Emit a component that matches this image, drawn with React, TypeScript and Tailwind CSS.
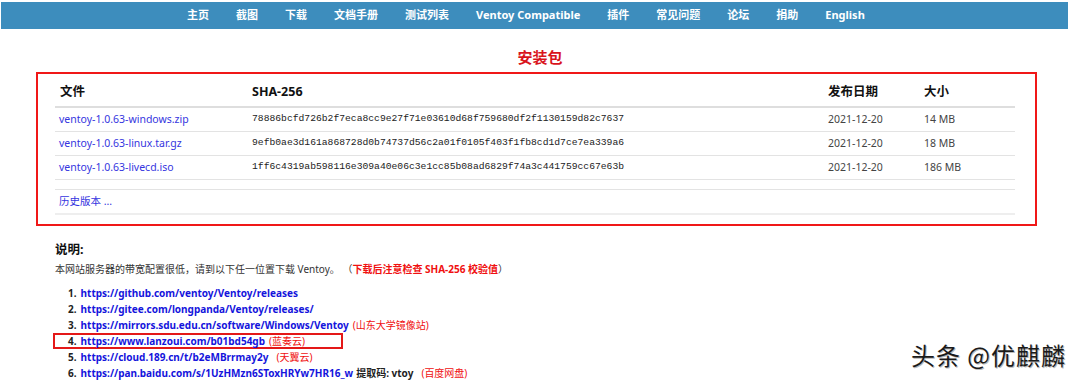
import React from 'react';

const navItems = ['主页', '截图', '下载', '文档手册', '测试列表', 'Ventoy Compatible', '插件', '常见问题', '论坛', '捐助', 'English'];

const files = [
  { name: 'ventoy-1.0.63-windows.zip', sha: '78886bcfd726b2f7eca8cc9e27f71e03610d68f759680df2f1130159d82c7637', size: '14 MB' },
  { name: 'ventoy-1.0.63-linux.tar.gz', sha: '9efb0ae3d161a868728d0b74737d56c2a01f0105f403f1fb8cd1d7ce7ea339a6', size: '18 MB' },
  { name: 'ventoy-1.0.63-livecd.iso', sha: '1ff6c4319ab598116e309a40e06c3e1cc85b08ad6829f74a3c441759cc67e63b', size: '186 MB' },
];

const mirrors = [
  { url: 'https://github.com/ventoy/Ventoy/releases' },
  { url: 'https://gitee.com/longpanda/Ventoy/releases/' },
  { url: 'https://mirrors.sdu.edu.cn/software/Windows/Ventoy', note: '(山东大学镜像站)' },
  { url: 'https://www.lanzoui.com/b01bd54gb', note: '(蓝奏云)', boxed: true },
  { url: 'https://cloud.189.cn/t/b2eMBrrmay2y', note: '(天翼云)', gap: true },
  { url: 'https://pan.baidu.com/s/1UzHMzn6SToxHRYw7HR16_w', code: true, note: '(百度网盘)', gap: true },
];

export default function App() {
  return (
    <div className="relative w-[1080px] h-[389px] overflow-hidden bg-white font-['Noto_Sans','Noto_Sans_CJK_SC',sans-serif] text-[#333]">
      {/* top menu */}
      <div className="mt-[2px] ml-[1px] w-[1067px] h-[27px] bg-[#3d8dbd] flex items-center pl-[186px] gap-[27px] text-white font-bold text-[11px]">
        {navItems.map((item) => (
          <span key={item}>{item}</span>
        ))}
      </div>

      <div className="mt-[18px] text-center text-[15px] leading-[20px] font-bold text-[#d9141c]">安装包</div>

      {/* release table */}
      <div className="mt-[5px] ml-[36px] w-[1001px] h-[154px] border-2 border-[#f01818] pl-[17px]">
        <div className="w-[960px]">
          <div className="flex h-[34px] items-center pt-[4px] border-b-2 border-[#dedede] text-[12.5px] font-bold text-[#111]">
            <div className="w-[197px] pl-[5px]">文件</div>
            <div className="w-[576px]">SHA-256</div>
            <div className="w-[96px]">发布日期</div>
            <div>大小</div>
          </div>
          {files.map((f) => (
            <div key={f.name} className="flex h-[24px] items-center border-b border-[#e3e3e3] text-[10.5px]">
              <div className="w-[197px] pl-[4px] text-[#3535e0]">{f.name}</div>
              <div className="w-[576px] font-['Liberation_Mono',monospace] text-[9.7px] text-[#222]">{f.sha}</div>
              <div className="w-[96px] text-[#444]">2021-12-20</div>
              <div className="text-[#444]">{f.size}</div>
            </div>
          ))}
          <div className="h-[10px] border-b border-[#e3e3e3]" />
          <div className="flex h-[25px] items-center border-b-2 border-[#eeeeee] pl-[4px] text-[10.5px] text-[#3535e0]">历史版本 ...</div>
        </div>
      </div>

      {/* notes */}
      <div className="mt-[16px] ml-[55px]">
        <div className="text-[12.5px] leading-[16px] font-bold text-[#111]">说明:</div>
        <div className="mt-[4px] text-[10px] leading-[14px] text-[#333]">
          本网站服务器的带宽配置很低，请到以下任一位置下载 Ventoy。 （<span className="font-bold text-[#f01010]">下载后注意检查 SHA-256 校验值</span>）
        </div>
        <div className="mt-[9px] ml-[-2px]">
          {mirrors.map((m, i) => (
            <div
              key={m.url}
              className={
                m.boxed
                  ? 'flex h-[16px] w-[290px] items-center border-2 border-[#e41818] pl-[13px] text-[10px] whitespace-nowrap'
                  : 'flex h-[16px] items-center border-2 border-transparent pl-[13px] text-[10px] whitespace-nowrap'
              }
            >
              <span className="font-bold text-[#222]">{i + 1}.</span>
              <span className="ml-[4px] font-bold text-[#1414dc]">{m.url}</span>
              {m.code && <span className="ml-[3px] font-bold text-[#222]">提取码: vtoy</span>}
              {m.note && <span className={m.gap ? 'ml-[8px] text-[#f01010]' : 'ml-[4px] text-[#f01010]'}>{m.note}</span>}
            </div>
          ))}
        </div>
      </div>

      {/* watermark overlay */}
      <div className="absolute right-[14px] top-[339px] text-[24px] leading-[32px] tracking-[1px] text-[#1a1a1a] [text-shadow:1px_1px_0_#bbb] font-['Noto_Sans_CJK_SC',sans-serif]">
        头条 @优麒麟
      </div>
    </div>
  );
}
